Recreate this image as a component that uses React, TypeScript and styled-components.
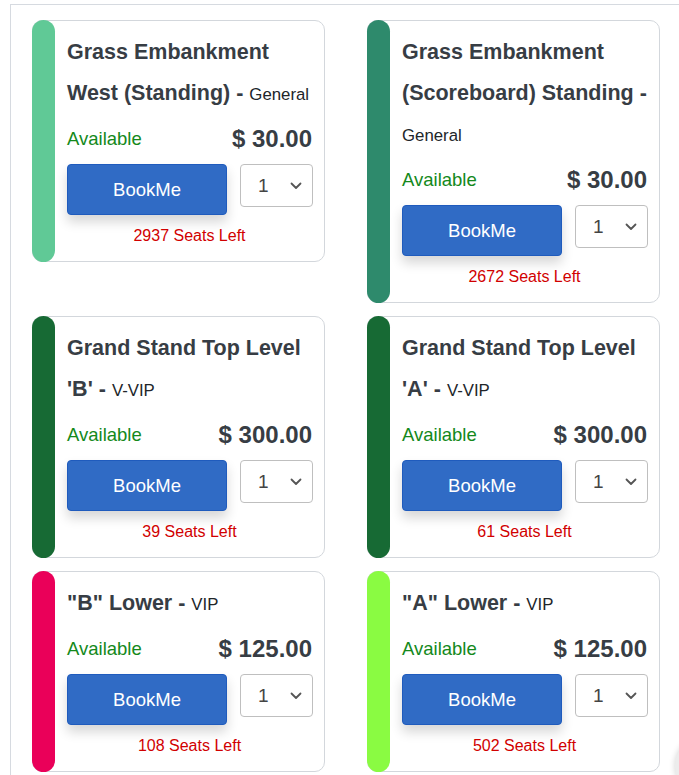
import styled, { createGlobalStyle } from 'styled-components';

const GlobalStyle = createGlobalStyle`
  html, body {
    margin: 0;
    padding: 0;
    background: #ffffff;
    font-family: "Liberation Sans", Arial, sans-serif;
  }
  * {
    box-sizing: border-box;
  }
`;

const Page = styled.div`
  margin: 4px 0 0 10px;
  border-top: 1px solid #d6dae0;
  border-left: 1px solid #d6dae0;
  min-height: 900px;
`;

const Grid = styled.div`
  display: grid;
  grid-template-columns: 293px 293px;
  column-gap: 42px;
  row-gap: 13px;
  align-items: start;
  padding: 15px 0 0 21px;
`;

const Card = styled.div`
  display: flex;
  border: 1px solid #d3d7dc;
  border-radius: 10px;
  background: #ffffff;
`;

const Bar = styled.div<{ $color: string }>`
  flex: 0 0 23px;
  margin: -1px 0 -1px -1px;
  border-radius: 12px;
  background: ${(p) => p.$color};
`;

const Body = styled.div`
  flex: 1;
  min-width: 0;
  padding: 11px 12px 13px 12px;
`;

const Title = styled.div`
  font-size: 21.5px;
  line-height: 41px;
  font-weight: 700;
  color: #373d44;
`;

const Tier = styled.span`
  font-size: 16.8px;
  line-height: 1;
  font-weight: 400;
  color: #212529;
`;

const PriceRow = styled.div`
  display: flex;
  justify-content: space-between;
  align-items: center;
  margin-top: 10px;
  height: 29px;
`;

const Status = styled.span`
  font-size: 18.5px;
  color: #14891b;
`;

const Price = styled.span`
  font-size: 24px;
  font-weight: 700;
  color: #373d44;
`;

const Actions = styled.div`
  display: grid;
  grid-template-columns: 160px 73px;
  column-gap: 13px;
  align-items: start;
  margin-top: 11px;
`;

const BookButton = styled.button`
  height: 51px;
  border: 1px solid #1f5bbd;
  border-radius: 4px;
  background: #306bc5;
  color: #ffffff;
  font-family: "Liberation Sans", Arial, sans-serif;
  font-size: 18.5px;
  box-shadow: 0 7px 12px rgba(0, 0, 0, 0.16);
  cursor: pointer;
`;

const QtySelect = styled.div`
  height: 43px;
  display: flex;
  align-items: center;
  justify-content: space-between;
  padding: 0 10px 0 17px;
  border: 1px solid #bfbfbf;
  border-radius: 4px;
  font-size: 19px;
  color: #444;
`;

const SeatsLeft = styled.div`
  margin-top: 9px;
  text-align: center;
  font-size: 16px;
  line-height: 24px;
  color: #d10000;
`;

const FloatingBall = styled.div`
  position: fixed;
  left: 675px;
  top: 736px;
  width: 60px;
  height: 60px;
  border-radius: 50%;
  background: #ececec;
  box-shadow: 0 0 6px rgba(0, 0, 0, 0.18);
`;

const Chevron = () => (
  <svg width="12" height="8" viewBox="0 0 12 8" fill="none">
    <path d="M1.5 1.5 L6 6 L10.5 1.5" stroke="#555" strokeWidth="1.8" strokeLinecap="round" strokeLinejoin="round" />
  </svg>
);

interface Section {
  name: string;
  tier: string;
  price: string;
  seats: number;
  color: string;
}

const sections: Section[] = [
  { name: 'Grass Embankment West (Standing)', tier: 'General', price: '30.00', seats: 2937, color: '#60c996' },
  { name: 'Grass Embankment (Scoreboard) Standing', tier: 'General', price: '30.00', seats: 2672, color: '#2e8a6c' },
  { name: "Grand Stand Top Level 'B'", tier: 'V-VIP', price: '300.00', seats: 39, color: '#176a34' },
  { name: "Grand Stand Top Level 'A'", tier: 'V-VIP', price: '300.00', seats: 61, color: '#176a34' },
  { name: '"B" Lower', tier: 'VIP', price: '125.00', seats: 108, color: '#ea0059' },
  { name: '"A" Lower', tier: 'VIP', price: '125.00', seats: 502, color: '#8afb42' },
];

function SeatCard({ section }: { section: Section }) {
  return (
    <Card>
      <Bar $color={section.color} />
      <Body>
        <Title>
          {section.name} - <Tier>{section.tier}</Tier>
        </Title>
        <PriceRow>
          <Status>Available</Status>
          <Price>$ {section.price}</Price>
        </PriceRow>
        <Actions>
          <BookButton>BookMe</BookButton>
          <QtySelect>
            <span>1</span>
            <Chevron />
          </QtySelect>
        </Actions>
        <SeatsLeft>{section.seats} Seats Left</SeatsLeft>
      </Body>
    </Card>
  );
}

export default function App() {
  return (
    <>
      <GlobalStyle />
      <Page>
        <Grid>
          {sections.map((s) => (
            <SeatCard key={s.name} section={s} />
          ))}
        </Grid>
      </Page>
      <FloatingBall />
    </>
  );
}
